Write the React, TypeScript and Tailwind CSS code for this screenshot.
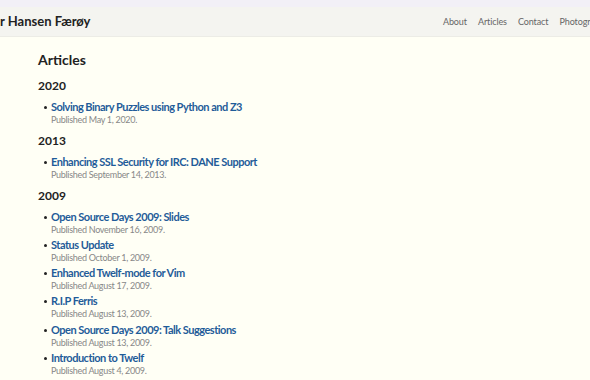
import React from "react";

const years: { year: string; items: [string, string][] }[] = [
  { year: "2020", items: [["Solving Binary Puzzles using Python and Z3", "May 1, 2020"]] },
  { year: "2013", items: [["Enhancing SSL Security for IRC: DANE Support", "September 14, 2013"]] },
  {
    year: "2009",
    items: [
      ["Open Source Days 2009: Slides", "November 16, 2009"],
      ["Status Update", "October 1, 2009"],
      ["Enhanced Twelf-mode for Vim", "August 17, 2009"],
      ["R.I.P Ferris", "August 13, 2009"],
      ["Open Source Days 2009: Talk Suggestions", "August 13, 2009"],
      ["Introduction to Twelf", "August 4, 2009"],
    ],
  },
];

export default function App() {
  return (
    <div className="w-[590px] h-[380px] overflow-hidden bg-[#fffff5] flex flex-col" style={{ fontFamily: "Lato, 'Open Sans', sans-serif" }}>
      <div className="h-[7px] shrink-0 bg-[#f2f0f7]" />
      <header className="h-[30px] shrink-0 bg-[#f4f4f0] border-b border-[#ecece6] flex items-center justify-between whitespace-nowrap overflow-hidden">
        <div className="text-[13px] font-bold text-[#222] leading-none">r Hansen Færøy</div>
        <nav className="flex gap-[11px] text-[9px] text-[#666] tracking-[-0.1px] -mr-[19px]">
          <span>About</span>
          <span>Articles</span>
          <span>Contact</span>
          <span>Photography</span>
        </nav>
      </header>
      <main className="flex-1 pl-[38px] pt-[14px] text-[#222]">
        <h1 className="text-[14px] font-bold leading-[18px] mb-[8.5px]">Articles</h1>
        {years.map((y) => (
          <section key={y.year}>
            <h2 className="text-[12px] font-bold leading-[16px] mb-[6px]">{y.year}</h2>
            <ul className="pl-[13px] mb-[7px]">
              {y.items.map(([t, d]) => (
                <li key={t} className="relative mb-[2.3px]">
                  <span className="absolute -left-[7px] top-[6px] w-[3px] h-[3px] rounded-full bg-[#222]" />
                  <div className="text-[11px] font-bold leading-[14px] text-[#1f5c99] tracking-[-0.5px]">{t}</div>
                  <div className="text-[9px] leading-[12px] text-[#888] tracking-[-0.3px]">Published {d}.</div>
                </li>
              ))}
            </ul>
          </section>
        ))}
      </main>
      <div className="h-[5px] shrink-0 bg-[#ededf0]" />
    </div>
  );
}
